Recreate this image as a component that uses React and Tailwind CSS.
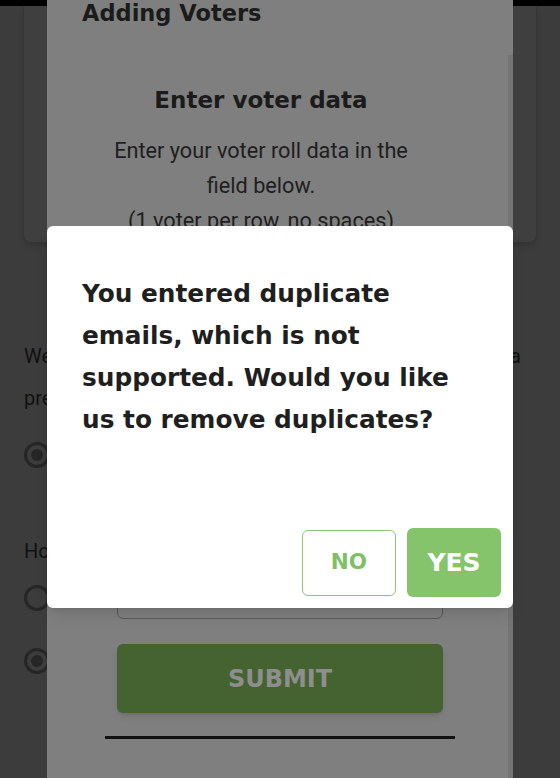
import React from "react";

const heading = "font-['DejaVu_Sans',sans-serif]";

function Radio({ checked }) {
  return (
    <div className="flex h-[26px] w-[26px] items-center justify-center rounded-full border-[3px] border-[#262626]">
      {checked && <div className="h-[12px] w-[12px] rounded-full bg-[#262626]" />}
    </div>
  );
}

function BackgroundPage() {
  return (
    <div className="flex flex-col">
      <div className="h-[6px] bg-black" />
      <div className="mx-[23px] h-[237px] rounded-b-lg border border-t-0 border-[#353535] bg-[#3f3f3f] shadow-md" />
      <div className="flex flex-col pl-[24px] pr-[39px] pt-[92px] text-[20px] leading-[42px] text-[#111]">
        <p className="text-justify">
          We will send every voter a private voting link in a prescheduled email message.
        </p>
        <div className="mt-[15px] flex items-center gap-3">
          <Radio checked />
          <span>Send now</span>
        </div>
        <p className="mt-[54px]">How should voters be notified?</p>
        <div className="mt-[5px] flex items-center gap-3">
          <Radio />
          <span>Email</span>
        </div>
        <div className="mt-[21px] flex items-center gap-3">
          <Radio checked />
          <span>Text</span>
        </div>
      </div>
    </div>
  );
}

function AddingVotersModal() {
  return (
    <div className="absolute inset-y-0 left-[47px] flex w-[466px] flex-col bg-[#7f7f7f] text-[#1b1b1b]">
      <h1 className={`${heading} pl-[35px] text-[22.5px] font-bold leading-[26px]`}>
        Adding Voters
      </h1>
      <div className="relative mt-[29px] flex flex-1 flex-col">
        <div className="absolute right-0 top-0 h-full w-[5px] bg-[#747474]" />
        <div className="flex w-[393px] flex-col items-center pl-[35px] pt-[30px] text-center">
          <h2 className={`${heading} text-[23px] font-bold leading-[30px]`}>
            Enter voter data
          </h2>
          <p className="mt-[18px] text-[21.7px] leading-[35px] text-[#1e1e1e]">
            Enter your voter roll data in the
            <br />
            field below.
            <br />
            (1 voter per row, no spaces)
          </p>
        </div>
        <div className="mx-[70px] mt-[140px] h-[241px] rounded-b-md border border-[#5a5a5a]" />
        <button className={`${heading} mx-[70px] mt-[25px] h-[69px] rounded-md bg-[#446330] text-[24px] font-bold text-[#8e8e8e] shadow-md`}>
          SUBMIT
        </button>
        <div className="mx-[58px] mt-[23px] h-[3px] bg-[#111]" />
      </div>
    </div>
  );
}

function DuplicateDialog() {
  return (
    <div className="absolute left-[47px] top-[226px] flex h-[382px] w-[466px] flex-col rounded-md bg-white shadow-lg">
      <p className={`${heading} px-[35px] pt-[47px] text-[24.8px] font-bold leading-[42px] text-[#1f1f1f]`}>
        You entered duplicate
        <br />
        emails, which is not
        <br />
        supported. Would you like
        <br />
        us to remove duplicates?
      </p>
      <div className={`${heading} mt-auto flex items-center justify-end gap-[11px] pb-[11px] pr-[12px]`}>
        <button className="h-[66px] w-[94px] rounded-md border border-[#8cc874] text-[21.5px] font-bold text-[#7fc064]">
          NO
        </button>
        <button className="h-[69px] w-[94px] rounded-md bg-[#86c46b] text-[25px] font-bold text-white">
          YES
        </button>
      </div>
    </div>
  );
}

export default function App() {
  return (
    <div className="relative h-[778px] w-[560px] overflow-hidden bg-[#3c3c3c] font-['Roboto',sans-serif]">
      <BackgroundPage />
      <AddingVotersModal />
      <DuplicateDialog />
    </div>
  );
}
